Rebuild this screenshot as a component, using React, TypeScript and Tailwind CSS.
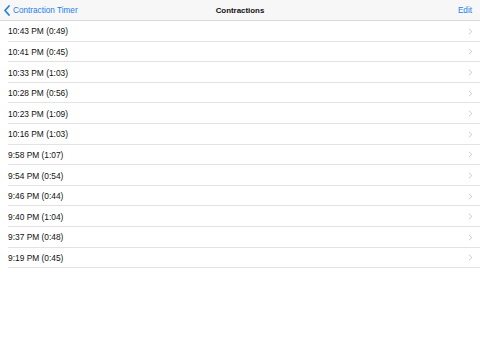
const rows = [
  '10:43 PM (0:49)',
  '10:41 PM (0:45)',
  '10:33 PM (1:03)',
  '10:28 PM (0:56)',
  '10:23 PM (1:09)',
  '10:16 PM (1:03)',
  '9:58 PM (1:07)',
  '9:54 PM (0:54)',
  '9:46 PM (0:44)',
  '9:40 PM (1:04)',
  '9:37 PM (0:48)',
  '9:19 PM (0:45)',
]

export default function App() {
  return (
    <div className="h-[351px] w-[480px] overflow-hidden bg-white font-['Liberation_Sans',Arial,sans-serif]">
      <header className="flex h-[21px] items-center justify-between border-b border-[#d9d9d9] bg-[#f7f7f7] px-[3px] pt-[1.5px]">
        <div className="flex w-[120px] items-center gap-[2px] text-[8.2px] text-[#1a7ef5]">
          <svg width="8" height="11" viewBox="0 0 8 11" className="mt-[-1px] shrink-0">
            <path d="M6 1 L2 5.5 L6 10" fill="none" stroke="#1a7ef5" strokeWidth="1.7" strokeLinecap="round" strokeLinejoin="round" />
          </svg>
          <span>Contraction Timer</span>
        </div>
        <div className="text-[7.9px] font-bold text-[#111]">Contractions</div>
        <div className="flex w-[120px] justify-end pr-[5px] text-[8.2px] text-[#1a7ef5]">Edit</div>
      </header>
      <ul className="pl-[8px]">
        {rows.map((r) => (
          <li
            key={r}
            className="flex h-[20.6px] items-center justify-between border-b border-[#e3e3e3] pr-[7px] pt-[2px] text-[8.4px] text-[#111]"
          >
            <span>{r}</span>
            <svg width="5" height="7" viewBox="0 0 5 7" className="mt-[-1px]">
              <path d="M1 0.8 L3.8 3.5 L1 6.2" fill="none" stroke="#c4c4c8" strokeWidth="0.9" />
            </svg>
          </li>
        ))}
      </ul>
    </div>
  )
}
